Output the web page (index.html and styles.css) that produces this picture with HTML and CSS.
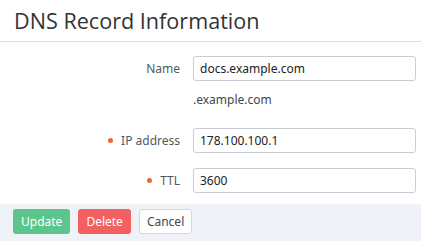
FILE: index.html
```html
<!DOCTYPE html>
<html lang="en">

<head>
    <meta charset="UTF-8">
    <title>DNS Record Information</title>
    <link rel="stylesheet" href="styles.css">
</head>

<body>
    <div class="hdr">
        <h2>DNS Record Information</h2>
    </div>

    <form class="frm">
        <div class="row">
            <label class="lbl">Name</label>
            <div class="fld">
                <input type="text" value="docs.example.com">
                <div class="hint">.example.com</div>
            </div>
        </div>

        <div class="row">
            <label class="lbl"><span class="req"></span>IP address</label>
            <div class="fld">
                <input type="text" value="178.100.100.1">
            </div>
        </div>

        <div class="row">
            <label class="lbl"><span class="req"></span>TTL</label>
            <div class="fld">
                <input type="text" value="3600">
            </div>
        </div>
    </form>

    <div class="ftr">
        <button class="btn btn-ok" type="button">Update</button>
        <button class="btn btn-del" type="button">Delete</button>
        <button class="btn btn-cancel" type="button">Cancel</button>
    </div>
</body>

</html>
```

FILE: styles.css
```css
body {
    margin: 0;
    font-family: "Noto Sans", sans-serif;
    font-size: 12px;
    color: #3c4651;
    background: #fff;
}

.hdr {
    height: 41px;
    border-bottom: 1px solid #dcdcdc;
    padding: 0 14px;
    display: flex;
    align-items: center;
}

.hdr h2 {
    margin: 0;
    font-family: "Open Sans", sans-serif;
    font-weight: 400;
    font-size: 21.6px;
    color: #333;
    line-height: 1;
}

.frm {
    padding: 14px 5px 11px 0;
}

.row {
    display: grid;
    grid-template-columns: 193px 1fr;
    margin-bottom: 15px;
}

.row:last-child {
    margin-bottom: 0;
}

.lbl {
    height: 25px;
    display: flex;
    align-items: center;
    justify-content: flex-end;
    padding-right: 13px;
    color: #4e5964;
}

.req {
    display: inline-block;
    width: 5px;
    height: 5px;
    border-radius: 50%;
    background: #f0643c;
    margin-right: 8px;
}

.fld input {
    display: block;
    box-sizing: border-box;
    width: 100%;
    height: 25px;
    margin: 0;
    padding: 0 6px;
    border: 1px solid #c9ced4;
    border-radius: 3px;
    font-family: "Noto Sans", sans-serif;
    font-size: 12px;
    color: #222;
}

.hint {
    margin: 11px 0 5px;
    line-height: 16px;
    color: #3c4651;
}

.ftr {
    background: #eff3f7;
    padding: 5px 13px 8px;
    display: flex;
    gap: 8px;
}

.btn {
    height: 25px;
    padding: 0 7px;
    border: 1px solid transparent;
    border-radius: 3px;
    font-family: "Noto Sans", sans-serif;
    font-size: 12px;
}

.btn-ok {
    background: #5cc58c;
    color: #fff;
}

.btn-del {
    background: #f45f5f;
    color: #fff;
}

.btn-cancel {
    background: #fff;
    border-color: #d3d8de;
    color: #3c4651;
}
```
